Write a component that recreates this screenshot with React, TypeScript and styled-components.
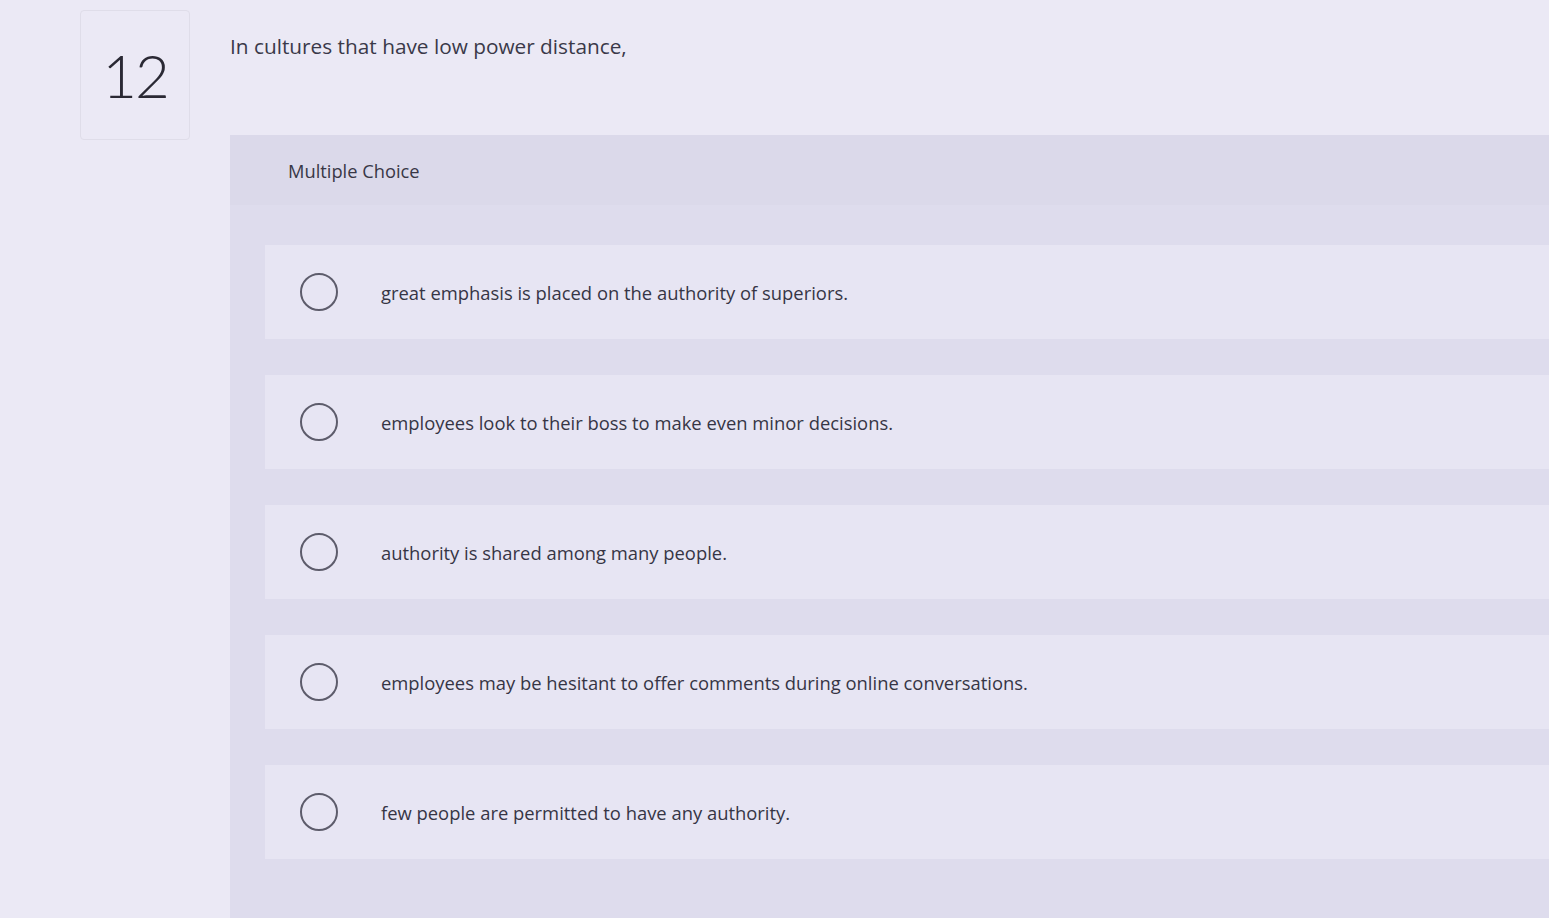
import styled, { createGlobalStyle } from 'styled-components';

const GlobalStyle = createGlobalStyle`
    html, body {
        margin: 0;
        padding: 0;
        background: #ebe9f5;
        font-family: 'Open Sans', 'Lato', sans-serif;
        color: #3b3a4a;
        overflow: hidden;
    }
`;

const Page = styled.div`
    display: flex;
    align-items: flex-start;
    gap: 40px;
    padding: 10px 0 0 80px;
    height: 908px;
`;

const NumberBox = styled.div`
    flex: 0 0 auto;
    display: flex;
    align-items: center;
    justify-content: center;
    width: 108px;
    height: 128px;
    border: 1px solid #dfdde9;
    border-radius: 4px;
    font-family: 'Lato', sans-serif;
    font-size: 60px;
    font-weight: 300;
    color: #2a2934;
    letter-spacing: -2px;
`;

const Main = styled.div`
    flex: 1;
    display: flex;
    flex-direction: column;
    min-width: 0;
    height: 100%;
`;

const Question = styled.div`
    font-size: 20.8px;
    color: #3a3949;
    padding-top: 22px;
    height: 125px;
    box-sizing: border-box;
`;

const Panel = styled.div`
    flex: 1;
    background: #dedced;
    display: flex;
    flex-direction: column;
`;

const PanelHeader = styled.div`
    height: 70px;
    display: flex;
    align-items: center;
    padding-left: 58px;
    font-size: 18.3px;
    color: #383746;
    background: #dbd9ea;
`;

const Options = styled.div`
    display: flex;
    flex-direction: column;
    gap: 36px;
    padding: 40px 0 0 35px;
`;

const OptionRow = styled.label`
    height: 94px;
    display: flex;
    align-items: center;
    padding-left: 35px;
    gap: 43px;
    background: #e7e5f3;
    cursor: pointer;
`;

const Radio = styled.span`
    flex: 0 0 auto;
    width: 34px;
    height: 34px;
    border: 2px solid #5d5c6b;
    border-radius: 50%;
`;

const OptionText = styled.span`
    font-size: 18.4px;
    color: #363545;
`;

const options = [
    'great emphasis is placed on the authority of superiors.',
    'employees look to their boss to make even minor decisions.',
    'authority is shared among many people.',
    'employees may be hesitant to offer comments during online conversations.',
    'few people are permitted to have any authority.',
];

const App = () => {
    return (
        <>
            <GlobalStyle />
            <Page>
                <NumberBox>12</NumberBox>
                <Main>
                    <Question>In cultures that have low power distance,</Question>
                    <Panel>
                        <PanelHeader>Multiple Choice</PanelHeader>
                        <Options>
                            {options.map((text) => (
                                <OptionRow key={text}>
                                    <Radio />
                                    <OptionText>{text}</OptionText>
                                </OptionRow>
                            ))}
                        </Options>
                    </Panel>
                </Main>
            </Page>
        </>
    );
};

export default App;
